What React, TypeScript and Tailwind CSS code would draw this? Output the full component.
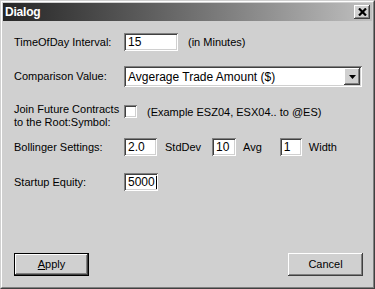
import React from 'react'

const raised =
  'bg-[#d0d0d0] shadow-[inset_-1px_-1px_#404040,inset_1px_1px_#ffffff,inset_-2px_-2px_#808080,inset_2px_2px_#d0d0d0]'
const sunken =
  'bg-white shadow-[inset_1px_1px_#808080,inset_-1px_-1px_#ffffff,inset_2px_2px_#404040,inset_-2px_-2px_#d0d0d0]'

function Field({ value, width, caret }: { value: string; width: string; caret?: boolean }) {
  return (
    <div className={`${sunken} ${width} h-[18px] flex items-center pl-[4px] text-[12px] text-black`}>
      {value}
      {caret && <span className="inline-block w-px h-[13px] bg-black ml-px" />}
    </div>
  )
}

function Row({ label, children, className }: { label: React.ReactNode; children: React.ReactNode; className?: string }) {
  return (
    <div className={`flex items-center ${className ?? ''}`}>
      <div className="w-[110px] shrink-0">{label}</div>
      {children}
    </div>
  )
}

export default function App() {
  return (
    <div
      className="w-[375px] h-[289px] bg-[#d0d0d0] text-[11px] text-black border border-t-[#d0d0d0] border-l-[#d0d0d0] border-r-[#404040] border-b-[#404040]"
      style={{ fontFamily: '"Liberation Sans", Arial, sans-serif' }}
    >
      <div className="h-full flex flex-col border border-t-white border-l-white border-r-[#808080] border-b-[#808080] p-px">
        {/* title bar */}
        <div className="h-[18px] flex items-center justify-between bg-gradient-to-r from-[#262626] to-[#c0c0c0] pl-[2px] pr-[2px]">
          <span className="text-white font-bold text-[12px] tracking-[-0.2px]">Dialog</span>
          <div className={`${raised} w-[16px] h-[14px] flex items-center justify-center`}>
            <svg width="9" height="8" viewBox="0 0 9 8">
              <path d="M1 0.5L8 7.5M8 0.5L1 7.5" stroke="#000" strokeWidth="2.2" />
            </svg>
          </div>
        </div>

        {/* body */}
        <div className="flex-1 flex flex-col pl-[11px] pr-[9px] pb-[10px]">
          <Row label="TimeOfDay Interval:" className="mt-[12px]">
            <Field value="15" width="w-[54px]" />
            <span className="ml-[10px]">(in Minutes)</span>
          </Row>

          <Row label="Comparison Value:" className="mt-[15px]">
            <div className={`${sunken} w-[238px] h-[21px] flex items-center justify-between pl-[4px] pr-[2px] text-[12px]`}>
              <span>Avgerage Trade Amount ($)</span>
              <div className={`${raised} w-[16px] h-[17px] flex items-center justify-center`}>
                <svg width="7" height="4" viewBox="0 0 7 4">
                  <path d="M0 0h7L3.5 4z" fill="#000" />
                </svg>
              </div>
            </div>
          </Row>

          <div className="flex items-start mt-[16px]">
            <div className="w-[110px] shrink-0 leading-[13px]">
              Join Future Contracts
              <br />
              to the Root:Symbol:
            </div>
            <div className={`${sunken} w-[13px] h-[13px] mt-[2px]`} />
            <span className="ml-[10px] mt-[1px]">(Example ESZ04, ESX04.. to @ES)</span>
          </div>

          <Row label="Bollinger Settings:" className="mt-[9px]">
            <Field value="2.0" width="w-[33px]" />
            <span className="ml-[8px]">StdDev</span>
            <div className="ml-[11px]">
              <Field value="10" width="w-[24px]" />
            </div>
            <span className="ml-[7px]">Avg</span>
            <div className="ml-[18px]">
              <Field value="1" width="w-[22px]" />
            </div>
            <span className="ml-[7px]">Width</span>
          </Row>

          <Row label="Startup Equity:" className="mt-[17px]">
            <Field value="5000" width="w-[34px]" caret />
          </Row>

          <div className="flex-1" />

          <div className="flex justify-between">
            <div className="border border-black">
              <div className={`${raised} w-[73px] h-[21px] flex items-center justify-center`}>
                <span>
                  <span className="underline">A</span>pply
                </span>
              </div>
            </div>
            <div className={`${raised} w-[75px] h-[23px] flex items-center justify-center`}>Cancel</div>
          </div>
        </div>
      </div>
    </div>
  )
}
